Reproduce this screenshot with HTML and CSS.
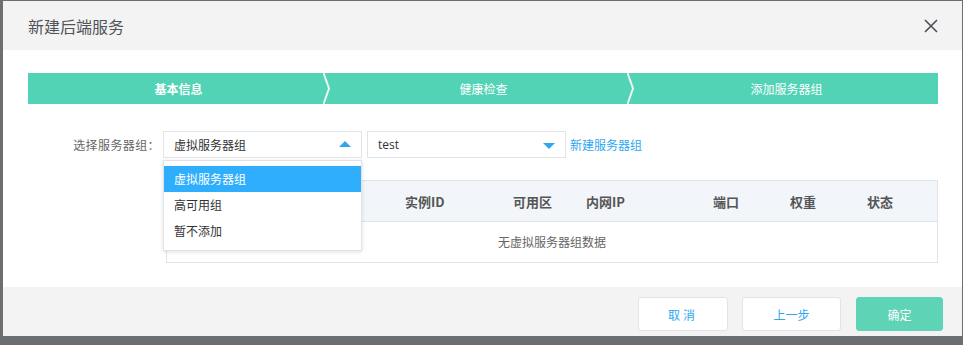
FILE: index.html
```html
<!DOCTYPE html>
<html lang="zh-CN">
<head>
  <meta charset="UTF-8">
  <title>新建后端服务</title>
  <link rel="stylesheet" href="styles.css">
</head>
<body>
  <div class="modal">
    <div class="modal-header">
      <span class="modal-title">新建后端服务</span>
      <svg class="close" width="14" height="14" viewBox="0 0 14 14">
        <path d="M1 1 L13 13 M13 1 L1 13" stroke="#4a4f57" stroke-width="1.6" fill="none"/>
      </svg>
    </div>

    <div class="modal-body">
      <!-- steps -->
      <div class="steps">
        <div class="step active">基本信息</div>
        <svg class="chevron" width="8" height="31" viewBox="0 0 8 31">
          <path d="M0.5 0 L6 15.5 L0.5 31" stroke="#eaf8f4" stroke-width="2" fill="none"/>
        </svg>
        <div class="step middle">健康检查</div>
        <svg class="chevron" width="8" height="31" viewBox="0 0 8 31">
          <path d="M0.5 0 L6 15.5 L0.5 31" stroke="#eaf8f4" stroke-width="2" fill="none"/>
        </svg>
        <div class="step last">添加服务器组</div>
      </div>

      <div class="form-row">
        <label class="form-label">选择服务器组：</label>
        <div class="select-wrap">
          <div class="select">
            <span>虚拟服务器组</span>
            <span class="arrow up"></span>
          </div>
          <ul class="dropdown">
            <li class="selected">虚拟服务器组</li>
            <li>高可用组</li>
            <li>暂不添加</li>
          </ul>
        </div>
        <div class="select second">
          <span class="latin">test</span>
          <span class="arrow down"></span>
        </div>
        <a class="link">新建服务器组</a>
      </div>

      <div class="grid-table">
        <div class="grid-head">
          <div></div>
          <div>实例ID</div>
          <div>可用区</div>
          <div>内网IP</div>
          <div>端口</div>
          <div>权重</div>
          <div>状态</div>
        </div>
        <div class="grid-empty">无虚拟服务器组数据</div>
      </div>
    </div>

    <div class="modal-footer">
      <button class="btn btn-plain spaced">取消</button>
      <button class="btn btn-plain">上一步</button>
      <button class="btn btn-primary">确定</button>
    </div>
  </div>
</body>
</html>
```

FILE: styles.css
```css
body {
  margin: 0;
  background-color: #6c6f72;
  font-family: "Noto Sans CJK SC", "Noto Sans", sans-serif;
  font-size: 12px;
  color: #555;
}

.modal {
  margin: 1px 1px 0 3px;
  width: 959px;
  height: 335px;
  background-color: #fff;
  display: flex;
  flex-direction: column;
}

.modal-header {
  height: 49px;
  background-color: #f3f3f3;
  display: flex;
  align-items: center;
  justify-content: space-between;
  padding: 0 24px 0 25px;
}

.modal-title {
  font-size: 16px;
  color: #505459;
}

.close {
  margin-top: 1px;
}

.modal-body {
  flex: 1;
  padding: 23px 24px 0 25px;
}

.steps {
  display: flex;
  height: 31px;
  background-color: #52d3b6;
}

.step {
  flex: 0 0 296px;
  box-sizing: border-box;
  color: #fff;
  font-size: 12px;
  line-height: 31px;
  text-align: center;
}

.step:first-child {
  flex: 0 0 295px;
  padding-left: 6px;
}

.step.middle {
  padding-left: 9px;
}

.step.last {
  flex: 1;
}

.step.active {
  font-weight: bold;
}

.chevron {
  flex: none;
  display: block;
}

.form-row {
  display: flex;
  align-items: center;
  margin-top: 27px;
  height: 27px;
}

.form-label {
  width: 135px;
  padding-right: 3px;
  box-sizing: border-box;
  text-align: right;
  color: #666;
  letter-spacing: 0.4px;
}

.select-wrap {
  position: relative;
}

.select {
  width: 199px;
  height: 27px;
  box-sizing: border-box;
  border: 1px solid #e2e4e7;
  display: flex;
  align-items: center;
  justify-content: space-between;
  padding: 0 10px 0 10px;
  color: #333;
  background: #fff;
}

.select.second {
  margin-left: 5px;
}

.latin {
  font-family: "Open Sans", "Liberation Sans", sans-serif;
  font-size: 12px;
  color: #333;
}

.arrow {
  width: 0;
  height: 0;
  border-left: 6px solid transparent;
  border-right: 6px solid transparent;
}

.arrow.up {
  border-bottom: 6px solid #2ea7f0;
  margin-top: -1px;
}

.arrow.down {
  border-top: 6px solid #2ea7f0;
  margin-top: 2px;
}

.dropdown {
  position: absolute;
  top: 29px;
  left: 0;
  width: 199px;
  box-sizing: border-box;
  margin: 0;
  padding: 5px 0 6px;
  list-style: none;
  background: #fff;
  border: 1px solid #dfe2e6;
  box-shadow: 0 1px 4px rgba(0, 0, 0, 0.12);
  z-index: 2;
}

.dropdown li {
  height: 26px;
  line-height: 26px;
  padding-left: 10px;
  color: #333;
}

.dropdown li.selected {
  background-color: #2eaefc;
  color: #fff;
}

.link {
  margin-left: 4px;
  color: #2ea7f0;
  cursor: pointer;
}

.grid-table {
  margin: 22px 0 0 138px;
  border: 1px solid #dfe4ea;
}

.grid-head {
  display: grid;
  grid-template-columns: 238px 108px 73px 127px 77px 77px 1fr;
  height: 40px;
  align-items: center;
  background-color: #f2f6fb;
  border-bottom: 1px solid #dfe4ea;
  font-size: 13px;
  font-weight: bold;
  color: #555;
}

.grid-empty {
  height: 40px;
  line-height: 40px;
  text-align: center;
  color: #666;
}

.modal-footer {
  height: 49px;
  background-color: #f3f3f3;
  display: flex;
  justify-content: flex-end;
  align-items: flex-start;
  padding: 10px 19px 0 0;
  box-sizing: border-box;
  gap: 14px;
}

.btn {
  height: 34px;
  border-radius: 3px;
  font-family: "Noto Sans CJK SC", sans-serif;
  font-size: 12px;
  cursor: pointer;
}

.btn-plain {
  width: 90px;
  background: #fff;
  border: 1px solid #dde4ec;
  color: #2ea7f0;
}

.btn-plain + .btn-plain {
  width: 99px;
}

.spaced {
  letter-spacing: 3px;
}

.btn-primary {
  width: 87px;
  margin-left: 1px;
  background: #5fd3b5;
  border: 1px solid #5fd3b5;
  color: #fff;
}
```
